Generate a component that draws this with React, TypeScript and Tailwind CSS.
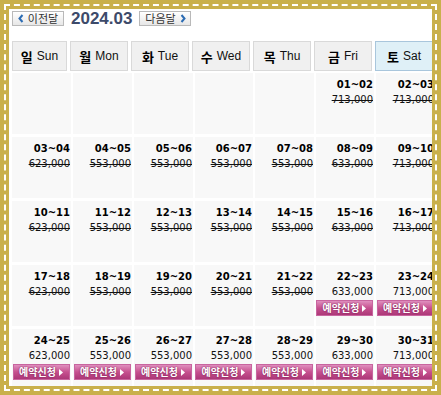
type Day = { d: string; p: string; open?: boolean } | null;

const heads = [
  { ko: "일", en: "Sun" },
  { ko: "월", en: "Mon" },
  { ko: "화", en: "Tue" },
  { ko: "수", en: "Wed" },
  { ko: "목", en: "Thu" },
  { ko: "금", en: "Fri" },
  { ko: "토", en: "Sat" },
];

const prices = ["623,000", "553,000", "553,000", "553,000", "553,000", "633,000", "713,000"];

function week(start: number, openFrom: number): Day[] {
  return prices.map((p, i) => {
    const a = start + i;
    const pad = (n: number) => String(n).padStart(2, "0");
    return { d: `${pad(a)}~${pad(a + 1)}`, p, open: i >= openFrom };
  });
}

const weeks: Day[][] = [
  [null, null, null, null, null, { d: "01~02", p: "713,000" }, { d: "02~03", p: "713,000" }],
  week(3, 7),
  week(10, 7),
  week(17, 5),
  week(24, 0),
];

const sans = "font-['DejaVu_Sans',Verdana,sans-serif]";
const ko = "font-['Noto_Sans_CJK_KR','Noto_Sans',sans-serif]";

function NavButton({ label, dir }: { label: string; dir: "prev" | "next" }) {
  const chevron = (
    <svg width="6" height="9" viewBox="0 0 6 9" className="shrink-0">
      <path
        d={dir === "prev" ? "M4.5 1 L1.5 4.5 L4.5 8" : "M1.5 1 L4.5 4.5 L1.5 8"}
        fill="none"
        stroke="#2c6cb3"
        strokeWidth="2"
      />
    </svg>
  );
  return (
    <div
      className={`flex h-[15px] w-[52px] items-center justify-center gap-[4px] border border-[#b9b9b9] bg-gradient-to-b from-white to-[#e7e7e7] text-[11px] leading-none text-[#333] ${ko}`}
    >
      {dir === "prev" && chevron}
      <span>{label}</span>
      {dir === "next" && chevron}
    </div>
  );
}

function Cell({ day }: { day: Day }) {
  return (
    <div className="flex flex-col items-end bg-[#f8f8f8] pr-[1px] pt-[6px]">
      {day && (
        <>
          <div className={`text-[10px] font-bold leading-[12px] text-black ${sans}`}>{day.d}</div>
          <div
            className={`mt-[3px] text-[10px] leading-[12px] text-[#111] ${sans} ${day.open ? "" : "line-through"}`}
          >
            {day.p}
          </div>
          {day.open && (
            <div className="mt-[2px] flex h-[16px] w-[57px] items-center justify-center gap-[3px] self-center border border-[#c8659f] bg-gradient-to-b from-[#e08fbf] via-[#c6508f] to-[#ad3878]">
              <span
                className={`text-[10px] font-bold leading-none text-white [text-shadow:0_0_2px_#6e1748] ${ko}`}
              >
                예약신청
              </span>
              <svg width="4" height="7" viewBox="0 0 4 7">
                <path d="M0 0 L4 3.5 L0 7 Z" fill="white" />
              </svg>
            </div>
          )}
        </>
      )}
    </div>
  );
}

export default function App() {
  return (
    <div className="h-[395px] w-[441px] bg-[#c9b04c] p-[4px]">
      <div className="h-full border-2 border-dashed border-white p-[3px]">
        <div className="h-full overflow-hidden bg-white pl-[3px] pt-[1px]">
          {/* month nav */}
          <div className="flex h-[17px] items-center">
            <NavButton label="이전달" dir="prev" />
            <span
              className="ml-[7px] mr-[7px] font-['Liberation_Sans',Arial,sans-serif] text-[17px] font-bold leading-none text-[#3d4a6a]"
            >
              2024.03
            </span>
            <NavButton label="다음달" dir="next" />
          </div>

          {/* weekday header */}
          <div className="mt-[14px] grid w-max grid-cols-[55px_repeat(6,58px)] gap-x-[3px]">
            {heads.map((h, i) => (
              <div
                key={h.en}
                className={`flex h-[30px] items-center justify-center gap-[4px] border ${
                  i === 6 ? "border-[#a9c6dc] bg-[#dff0f7]" : "border-[#d9d9d9] bg-[#f0f0f0]"
                }`}
              >
                <span className={`text-[13px] font-bold leading-none text-black ${ko}`}>{h.ko}</span>
                <span className="font-['Liberation_Sans',Arial,sans-serif] text-[12px] leading-none text-[#111]">
                  {h.en}
                </span>
              </div>
            ))}
          </div>

          {/* days */}
          <div className="mt-[2px] grid w-max grid-cols-[59px_59px_59px_58px_59px_58px_59px] auto-rows-[61px] gap-x-[2px] gap-y-[3px]">
            {weeks.flatMap((w, wi) => w.map((day, di) => <Cell key={`${wi}-${di}`} day={day} />))}
          </div>
        </div>
      </div>
    </div>
  );
}
